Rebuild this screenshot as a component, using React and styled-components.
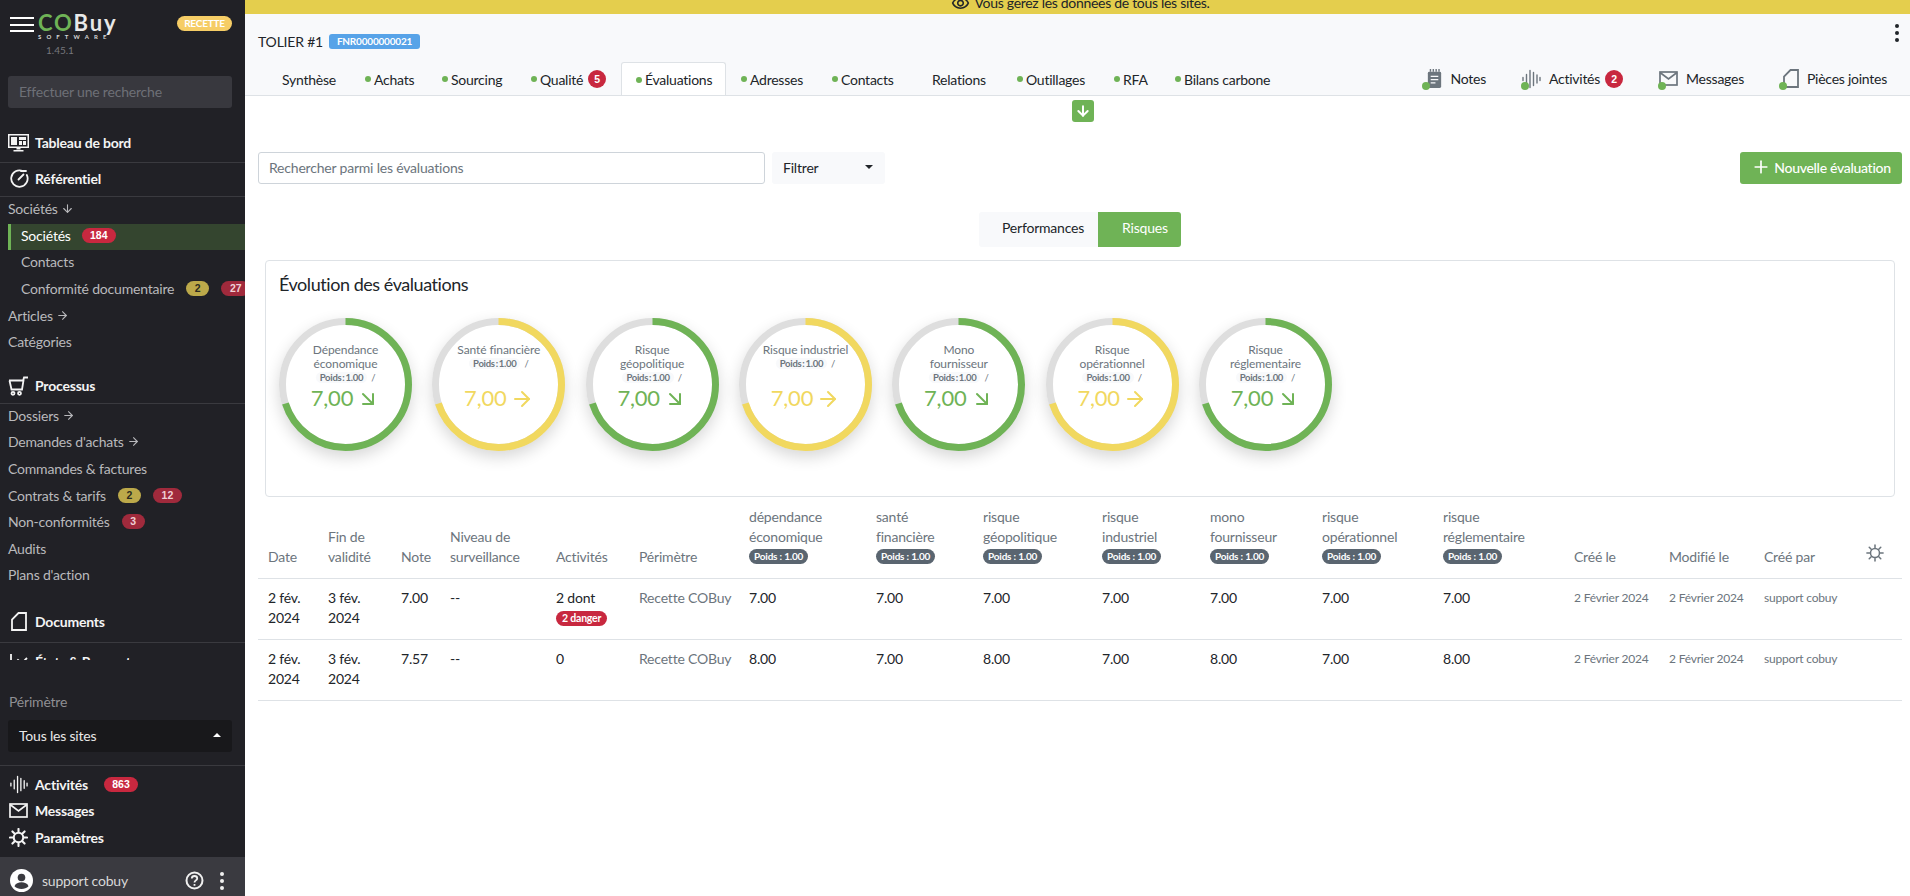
import React from "react";
import styled, { createGlobalStyle } from "styled-components";
import { ArrowRight, ArrowDown, ArrowDownRight, Plus } from "lucide-react";

const GREEN = "#6fb356";
const YELLOW = "#f1d85f";
const RED = "#c8283f";
const GREY = "#6c757d";
const LINE = "#dee2e6";

const Global = createGlobalStyle`
  html, body { margin: 0; padding: 0; height: 100%; overflow: hidden; background: #fff; }
  body { font-family: Lato, "Noto Sans", sans-serif; font-size: 14px; color: #212529; letter-spacing: -.2px; }
  * { box-sizing: border-box; }
`;

const Page = styled.div`display: flex; width: 1910px; height: 896px; overflow: hidden;`;

/* ---------- Sidebar ---------- */
const Sidebar = styled.aside`
  width: 245px; flex: none; height: 896px; background: #212126; color: #b9b9bc;
  display: flex; flex-direction: column; overflow: hidden;
`;
const Brand = styled.div`height: 76px; flex: none; display: flex; align-items: flex-start; padding: 13px 13px 0 10px;`;
const Burger = styled.div`
  width: 24px; height: 15px; margin-top: 4px; flex: none;
  border-top: 2px solid #fff; border-bottom: 2px solid #fff; position: relative;
  &::after { content: ""; position: absolute; left: 0; right: 0; top: 4.5px; height: 2px; background: #fff; }
`;
const Logo = styled.div`margin-left: 4px; display: flex; flex-direction: column; width: 66px;`;
const LogoName = styled.div`font-size: 22px; line-height: 19px; font-weight: 700; color: #e8e8e8; white-space: nowrap; letter-spacing: 1.8px;`;
const LogoCo = styled.span`color: ${GREEN}; font-weight: 700;`;
const LogoSub = styled.div`font-size: 6px; line-height: 7px; margin-top: 1px; letter-spacing: 5.1px; color: #d8d8d8; white-space: nowrap; font-weight: 700;`;
const Version = styled.div`font-size: 10px; line-height: 12px; color: #77777c; margin: 4px 0 0 8px; letter-spacing: 0;`;
const Recette = styled.span`
  margin-left: auto; margin-top: 3px; width: 55px; height: 15px; border-radius: 8px; background: #f6cd66; color: #fff;
  font-size: 10px; line-height: 15px; font-weight: 700; text-align: center;
`;
const SideSearch = styled.div`
  flex: none; height: 32px; margin: 0 13px 0 8px; background: #38383e; border-radius: 3px; color: #6e7077;
  font-size: 14px; line-height: 32px; padding-left: 11px;
`;
const Nav = styled.nav`flex: 1; min-height: 0; overflow: hidden;`;
const Section = styled.div`
  display: flex; align-items: center; gap: 6px; padding: 0 8px ${p => p.$pb}px; margin-top: ${p => p.$mt}px;
  height: ${p => 20 + p.$pb + 1}px; border-bottom: 1px solid #3a3a3f; color: #f4f4f4; font-weight: 700; font-size: 14px; line-height: 20px;
`;
const SectionPlain = styled(Section)`border-bottom: 0;`;
const SectionIcon = styled.span`width: 21px; height: 20px; flex: none; display: flex; align-items: center; justify-content: center;`;
const Item = styled.div`
  height: 26.6px; display: flex; align-items: center; padding: 0 0 3px 8px; white-space: nowrap; font-size: 14px; color: #b9b9bc;
  svg { margin-left: 3px; }
`;
const SubItem = styled(Item)`padding-left: 21px;`;
const ActiveItem = styled(SubItem)`
  margin-left: 8px; padding-left: 10px; color: #fff; background: #34452f; border-left: 3px solid ${GREEN};
`;
const Pill = styled.span`
  flex: none; margin-left: ${p => p.$ml ?? 12}px; height: 15px; min-width: ${p => p.$w}px; border-radius: 8px; text-align: center;
  font-family: "Liberation Sans", Arial, sans-serif; font-size: 10.5px; line-height: 15px; font-weight: 700; letter-spacing: 0;
  background: ${p => p.$bg}; color: ${p => p.$fg};
`;
const Perimeter = styled.div`flex: none; padding: 32px 13px 13px 8px; border-bottom: 1px solid #3a3a3f;`;
const PerimeterLabel = styled.div`line-height: 20px; color: #8f8f93; padding-left: 1px;`;
const PerimeterSelect = styled.div`
  margin-top: 8px; height: 32px; background: #18181b; border-radius: 3px; color: #e8e8e8; display: flex; align-items: center;
  justify-content: space-between; padding: 0 11px 2px;
`;
const Caret = styled.span`
  width: 0; height: 0; border-left: 4px solid transparent; border-right: 4px solid transparent;
  ${p => p.$up ? `border-bottom: 4px solid ${p.$c};` : `border-top: 4px solid ${p.$c};`}
`;
const Bottom = styled.div`flex: none; height: 91px; padding: 6px 0 0;`;
const BottomRow = styled.div`
  height: 26.6px; display: flex; align-items: center; gap: 7px; padding: 0 0 2px 9px; color: #f4f4f4; font-weight: 700;
  svg { flex: none; }
`;
const Footer = styled.div`
  flex: none; height: 39px; background: #3a3a40; display: flex; align-items: flex-start; padding: 12px 21px 0 10px; color: #d8d8d8;
`;
const Avatar = styled.div`width: 23px; height: 23px; flex: none;`;
const FooterName = styled.span`margin-left: 9px; line-height: 24px; flex: 1;`;
const FooterIcons = styled.div`display: flex; align-items: center; gap: 16px; height: 23px;`;
const Kebab = styled.div`display: flex; flex-direction: column; gap: 3px;`;
const TitleKebab = styled(Kebab)`margin: -18px 3px 0 auto;`;
const KebabDot = styled.span`width: 4px; height: 4px; border-radius: 50%; background: ${p => p.$c};`;

/* ---------- Main ---------- */
const Main = styled.main`flex: 1; min-width: 0; display: flex; flex-direction: column;`;
const Banner = styled.div`
  height: 14px; flex: none; background: #e4ce4d; overflow: hidden; display: flex; justify-content: center; align-items: flex-end;
  gap: 4px; color: #212529; font-size: 14px; line-height: 20px; white-space: nowrap; padding: 0 0 1px 6px; letter-spacing: -.3px;
  svg { flex: none; margin-bottom: 0; }
`;
const Header = styled.header`
  flex: none; height: 82px; background: #f8f9fb; border-bottom: 1px solid ${LINE}; padding: 18px 8px 0 13px; display: flex; flex-direction: column;
`;
const TitleRow = styled.div`display: flex; align-items: center; height: 20px; margin-bottom: 11px;`;
const Title = styled.span`font-size: 14px; color: #212529;`;
const Chip = styled.span`
  margin-left: 6px; width: 91px; height: 15px; background: #57a3e8; border-radius: 3px; color: #fff; font-size: 10px; line-height: 15px;
  font-weight: 700; text-align: center;
`;
const TabBar = styled.div`display: flex; height: 33px; align-items: stretch;`;
const Tab = styled.div`
  display: flex; align-items: center; padding: 1px 0 0 14px; width: ${p => p.$w}px; flex: none; white-space: nowrap; font-size: 14px; color: #212529; letter-spacing: -.25px;
  border: 1px solid ${p => p.$active ? LINE : "transparent"}; border-bottom: 0; border-radius: 3px 3px 0 0;
  background: ${p => p.$active ? "#fff" : "transparent"};
  height: ${p => p.$active ? "33px" : "32px"};
`;
const Dot = styled.span`
  width: 6px; height: 6px; border-radius: 50%; margin-right: 3px; flex: none; background: ${p => p.$off ? "transparent" : GREEN};
`;
const Count = styled.span`
  margin-left: 5px; width: 18px; height: 18px; border-radius: 50%; background: ${RED}; color: #fff; letter-spacing: 0;
  font-size: 10.5px; font-weight: 700; line-height: 18px; text-align: center; font-family: "Liberation Sans", Arial, sans-serif;
`;
const RightCount = styled(Count)`margin-left: -3px;`;
const RightTabs = styled.div`margin-left: auto; display: flex;`;
const RightTab = styled.div`
  display: flex; align-items: center; padding: 1px 0 0; margin-right: ${p => p.$mr}px; gap: 8px; white-space: nowrap; height: 32px; letter-spacing: -.25px;
`;
const IconWrap = styled.span`position: relative; display: inline-flex; justify-content: flex-end; align-items: center; width: 20px; height: 20px; flex: none;`;
const IconDot = styled.span`position: absolute; left: 0; bottom: -1px; width: 8px; height: 8px; border-radius: 50%; background: ${GREEN};`;

const Body = styled.div`flex: 1; padding: 0 8px 0 13px; min-height: 0;`;
const Collapse = styled.div`
  width: 22px; height: 22px; margin: 4px auto 0; position: relative; left: 3px; background: ${GREEN}; border-radius: 3px; color: #fff;
  display: flex; align-items: center; justify-content: center;
`;
const SearchRow = styled.div`display: flex; align-items: stretch; height: 32px; margin-top: 30px; gap: 7px;`;
const SearchBox = styled.div`
  width: 507px; border: 1px solid #ced4da; border-radius: 3px; color: ${GREY}; line-height: 30px; padding-left: 10px; font-size: 14px;
`;
const Filter = styled.div`
  width: 113px; background: #f8f9fb; border-radius: 3px; display: flex; align-items: center; justify-content: space-between; padding: 0 12px 2px 11px; color: #212529;
`;
const AddButton = styled.div`
  margin-left: auto; width: 162px; background: ${GREEN}; border-radius: 3px; color: #fff; display: flex; align-items: center; justify-content: center;
  gap: 3px; font-weight: 500; white-space: nowrap; letter-spacing: -.3px; padding-bottom: 2px;
`;
const Toggle = styled.div`display: flex; justify-content: center; margin-top: 28px; height: 35px;`;
const ToggleBtn = styled.div`
  width: ${p => p.$w}px; padding-left: ${p => p.$pl}px; line-height: 32px; color: ${p => p.$active ? "#fff" : "#212529"};
  background: ${p => p.$active ? GREEN : "#f8f9fb"}; border-radius: ${p => p.$active ? "0 3px 3px 0" : "3px 0 0 3px"};
`;
const Card = styled.section`
  height: 237px; margin: 13px 7px 0; border: 1px solid ${LINE}; border-radius: 4px; padding: 11px 13px 0;
`;
const CardTitle = styled.h2`margin: 0; font-size: 18px; font-weight: 400; line-height: 24px; color: #212529; letter-spacing: -.45px;`;
const Gauges = styled.div`display: flex; gap: 20.33px; margin-top: 22px;`;
const Gauge = styled.div`
  position: relative; width: 133px; height: 133px; flex: none; border-radius: 50%; box-shadow: 0 6px 16px rgba(0,0,0,.16);
  display: flex; flex-direction: column; align-items: center; padding-top: 25px;
`;
const Ring = styled.svg`position: absolute; inset: 0; width: 133px; height: 133px;`;
const GaugeTop = styled.div`height: 42px; width: 100px; text-align: center; color: ${GREY}; position: relative;`;
const GaugeLabel = styled.div`font-size: 12px; line-height: 14px; width: 88px; margin: 0 auto; letter-spacing: -.1px;`;
const GaugeWeight = styled.div`font-size: 9.5px; line-height: 12px; margin-top: 1px;`;
const WeightPill = styled.span`background: #f8f9fb; border-radius: 6px; padding: 0 4px; font-weight: 700; margin-right: 4px; letter-spacing: -.3px; word-spacing: -1px;`;
const GaugeValue = styled.div`
  display: flex; align-items: center; gap: 3px; height: 26px; font-size: 22px; font-weight: 400; color: ${p => p.$c}; position: relative; line-height: 26px;
  svg { margin-top: 2px; }
`;

const Table = styled.table`width: 1644px; table-layout: fixed; border-collapse: collapse;`;
const Col = styled.col`width: ${p => p.$w}px;`;
const Th = styled.th`
  padding: 10px 10px 11px; vertical-align: bottom; text-align: left; font-weight: 400; color: ${GREY}; font-size: 14px; line-height: 20px;
  border-bottom: 1px solid ${LINE};
`;
const ThLine = styled.div`white-space: nowrap;`;
const WeightBadge = styled.div`
  display: inline-block; vertical-align: bottom; height: 15px; line-height: 15px; margin: 2px 0 3px; padding: 0 5px; border-radius: 8px; background: #5a6570; color: #fff;
  font-size: 10px; font-weight: 700; white-space: nowrap; letter-spacing: -.2px;
`;
const Td = styled.td`
  padding: 9px 10px 11px; vertical-align: top; font-size: 14px; line-height: 20px; height: 61px; border-bottom: 1px solid ${LINE};
  color: ${p => p.$muted ? GREY : "#212529"}; white-space: ${p => p.$nowrap ? "nowrap" : "normal"};
`;
const SmallTd = styled(Td)`font-size: 12px; color: ${GREY}; white-space: nowrap;`;
const DangerBadge = styled.span`
  display: inline-block; height: 15px; line-height: 15px; padding: 0 6px; background: ${RED}; color: #fff; border-radius: 8px; font-size: 10.5px; font-weight: 700; vertical-align: top; margin-top: 3px;
`;

/* ---------- Icons ---------- */
const Wave = ({ c, s = 20 }) => (
  <svg width={s} height={s} viewBox="0 0 20 20" fill="none" stroke={c} strokeWidth="1.4" strokeLinecap="round">
    <path d="M2 8.500v3M5.500 5.500v9M9 1.500v17M12.500 3.500v13M16 6v8M19 8.500v3" />
  </svg>
);
const Mail = ({ c, w = 19, h = 15 }) => (
  <svg width={w} height={h} viewBox="0 0 19 15" fill="none" stroke={c} strokeWidth="1.7">
    <rect x="1" y="1" width="17" height="13" />
    <path d="M1 1.500l8.500 6.500L18 1.500" />
  </svg>
);
const Doc = ({ c, w = 16, h = 19 }) => (
  <svg width={w} height={h} viewBox="0 0 16 19" fill="none" stroke={c} strokeWidth="1.8">
    <path d="M1 18V7.500L7.500 1H15v17z" />
  </svg>
);
const Gear = ({ c, s = 18, w = 1.7 }) => (
  <svg width={s} height={s} viewBox="0 0 20 20" fill="none" stroke={c} strokeWidth={w} strokeLinecap="round">
    <circle cx="10" cy="10" r="5" />
    <path d="M10 1v3M10 16v3M1 10h3M16 10h3M3.600 3.600l2.200 2.200M14.200 14.200l2.200 2.200M3.600 16.400l2.200-2.200M14.200 5.800l2.200-2.200" />
  </svg>
);
const Monitor = () => (
  <svg width="21" height="20" viewBox="0 0 21 20" fill="none">
    <rect x=".75" y="1.750" width="19.500" height="12.500" stroke="#f4f4f4" strokeWidth="1.500" />
    <path d="M3 4h6v8H3zM11 4h7v3h-7zM11 8h3v4h-3zM15 8h3v4h-3z" fill="#f4f4f4" />
    <path d="M8.500 14.500h4v2h-4zM5.500 17h10v1.500h-10z" fill="#f4f4f4" />
  </svg>
);
const Dial = () => (
  <svg width="20" height="20" viewBox="0 0 20 20" fill="none" stroke="#f4f4f4" strokeWidth="1.800" strokeLinecap="round">
    <path d="M14 2.200A8.200 8.200 0 1 0 17.800 6" />
    <path d="M9.500 10.500l5-5" />
    <path d="M12 2h5v0" />
  </svg>
);
const Cart = () => (
  <svg width="21" height="20" viewBox="0 0 21 20" fill="none" stroke="#f4f4f4" strokeWidth="1.800">
    <path d="M1 4.500h14.500l-1.500 9H3.500L1.500 4.500zM15 5l1-3.500h4" />
    <circle cx="5" cy="17.300" r="1.500" />
    <circle cx="11.500" cy="17.300" r="1.500" />
  </svg>
);
const ChartIcon = () => (
  <svg width="20" height="20" viewBox="0 0 20 20" fill="none" stroke="#f4f4f4" strokeWidth="1.800">
    <path d="M2 2v16h17" />
    <path d="M5 12l4-4 4 3 5-5" />
  </svg>
);
const NoteIcon = () => (
  <svg width="15" height="19" viewBox="0 0 14 20" fill="#6c757d">
    <rect x="0" y="3" width="14" height="17" rx="1.500" />
    <path d="M2 0h1.500v3H2zM5 0h1.500v3H5zM8 0h1.500v3H8zM11 0h1.500v3H11z" />
    <path d="M3 7h8v1.300H3zM3 10.500h8v1.300H3zM3 14h5v1.300H3z" fill="#f8f9fb" />
  </svg>
);
const EyeIcon = () => (
  <svg width="19" height="19" viewBox="0 0 24 24" fill="#212529">
    <path d="M12 6c3.790 0 7.170 2.130 8.820 5.500C19.170 14.870 15.790 17 12 17s-7.170-2.130-8.820-5.500C4.830 8.130 8.210 6 12 6m0-2C7 4 2.730 7.110 1 11.500 2.730 15.890 7 19 12 19s9.270-3.110 11-7.500C21.270 7.110 17 4 12 4zm0 5c1.380 0 2.500 1.120 2.500 2.500S13.380 14 12 14s-2.500-1.120-2.500-2.500S10.620 9 12 9m0-2c-2.480 0-4.500 2.020-4.500 4.500S9.520 16 12 16s4.500-2.020 4.500-4.500S14.480 7 12 7z" />
  </svg>
);
const UserIcon = () => (
  <svg width="23" height="23" viewBox="0 0 23 23">
    <circle cx="11.500" cy="11.500" r="11.500" fill="#fff" />
    <circle cx="11.500" cy="8.500" r="3.800" fill="#3a3a40" />
    <path d="M4.500 17.200c1-3 4-4 7-4s6 1 7 4c-1.800 1.800-4.300 2.800-7 2.800s-5.200-1-7-2.800z" fill="#3a3a40" />
  </svg>
);
const HelpIcon = () => (
  <svg width="19" height="19" viewBox="0 0 19 19" fill="none" stroke="#f0f0f0" strokeWidth="2">
    <circle cx="9.500" cy="9.500" r="8" />
    <path d="M6.800 7.500c0-1.500 1.200-2.500 2.700-2.500s2.700 1 2.700 2.400c0 2-2.700 2-2.700 4" strokeWidth="1.800" />
    <path d="M9.500 13v1.800" strokeWidth="1.800" />
  </svg>
);

/* ---------- Data ---------- */
const GAUGES = [
  { label: "Dépendance économique", c: GREEN, down: true },
  { label: "Santé\u00a0financière", c: YELLOW },
  { label: "Risque géopolitique", c: GREEN, down: true },
  { label: "Risque\u00a0industriel", c: YELLOW },
  { label: "Mono fournisseur", c: GREEN, down: true },
  { label: "Risque opérationnel", c: YELLOW },
  { label: "Risque réglementaire", c: GREEN, down: true },
];
const WIDTHS = [60, 73, 49, 106, 83, 110, 127, 107, 119, 108, 112, 121, 131, 95, 95, 102, 46];
const CRITERIA = [
  ["dépendance", "économique"], ["santé", "financière"], ["risque", "géopolitique"], ["risque", "industriel"],
  ["mono", "fournisseur"], ["risque", "opérationnel"], ["risque", "réglementaire"],
];
const ROWS = [
  { note: "7.00", act: "2 dont", danger: true, vals: ["7.00", "7.00", "7.00", "7.00", "7.00", "7.00", "7.00"] },
  { note: "7.57", act: "0", danger: false, vals: ["8.00", "7.00", "8.00", "7.00", "8.00", "7.00", "8.00"] },
];
const TABS = [
  { t: "Synthèse", off: true, w: 92 }, { t: "Achats", w: 77 }, { t: "Sourcing", w: 89 }, { t: "Qualité", n: 5, w: 105 },
  { t: "Évaluations", active: true, w: 105 }, { t: "Adresses", w: 91 }, { t: "Contacts", w: 91 }, { t: "Relations", off: true, w: 94 },
  { t: "Outillages", w: 97 }, { t: "RFA", w: 61 }, { t: "Bilans carbone", w: 115 },
];
const CIRC = 2 * Math.PI * 63;

const Dim = { y: "#bca94a", r: "#a02a3c" };

export default function App() {
  return (
    <Page>
      <Global />
      <Sidebar>
        <Brand>
          <Burger />
          <Logo>
            <LogoName><LogoCo>CO</LogoCo>Buy</LogoName>
            <LogoSub>SOFTWARE</LogoSub>
            <Version>1.45.1</Version>
          </Logo>
          <Recette>RECETTE</Recette>
        </Brand>
        <SideSearch>Effectuer une recherche</SideSearch>
        <Nav>
          <Section $mt={25} $pb={9}><SectionIcon><Monitor /></SectionIcon>Tableau de bord</Section>
          <Section $mt={6} $pb={7}><SectionIcon><Dial /></SectionIcon>Référentiel</Section>
          <Item>Sociétés <ArrowDown size={13} /></Item>
          <ActiveItem>Sociétés<Pill $ml={11} $w={34} $bg={RED} $fg="#fff">184</Pill></ActiveItem>
          <SubItem>Contacts</SubItem>
          <SubItem>Conformité documentaire<Pill $w={23} $bg={Dim.y} $fg="#2b2b20">2</Pill><Pill $w={29} $bg={Dim.r} $fg="#f0d0d5">27</Pill></SubItem>
          <Item>Articles <ArrowRight size={13} /></Item>
          <Item>Catégories</Item>
          <Section $mt={19} $pb={7}><SectionIcon><Cart /></SectionIcon>Processus</Section>
          <Item>Dossiers <ArrowRight size={13} /></Item>
          <Item>Demandes d'achats <ArrowRight size={13} /></Item>
          <Item>Commandes &amp; factures</Item>
          <Item>Contrats &amp; tarifs<Pill $w={23} $bg={Dim.y} $fg="#2b2b20">2</Pill><Pill $w={29} $bg={Dim.r} $fg="#f0d0d5">12</Pill></Item>
          <Item>Non-conformités<Pill $w={23} $bg={Dim.r} $fg="#f0d0d5">3</Pill></Item>
          <Item>Audits</Item>
          <Item>Plans d'action</Item>
          <Section $mt={22} $pb={10}><SectionIcon><Doc c="#f4f4f4" /></SectionIcon>Documents</Section>
          <SectionPlain $mt={9} $pb={0}><SectionIcon><ChartIcon /></SectionIcon>États &amp; Rapports</SectionPlain>
        </Nav>
        <Perimeter>
          <PerimeterLabel>Périmètre</PerimeterLabel>
          <PerimeterSelect>Tous les sites<Caret $up $c="#fff" /></PerimeterSelect>
        </Perimeter>
        <Bottom>
          <BottomRow><Wave c="#f4f4f4" s={19} />Activités<Pill $ml={9} $w={34} $bg={RED} $fg="#fff">863</Pill></BottomRow>
          <BottomRow><Mail c="#f4f4f4" />Messages</BottomRow>
          <BottomRow><Gear c="#f4f4f4" s={19} w={2.2} />Paramètres</BottomRow>
        </Bottom>
        <Footer>
          <Avatar><UserIcon /></Avatar>
          <FooterName>support cobuy</FooterName>
          <FooterIcons>
            <HelpIcon />
            <Kebab>
              <KebabDot $c="#f0f0f0" /><KebabDot $c="#f0f0f0" /><KebabDot $c="#f0f0f0" />
            </Kebab>
          </FooterIcons>
        </Footer>
      </Sidebar>

      <Main>
        <Banner><EyeIcon />Vous gérez les données de tous les sites.</Banner>
        <Header>
          <TitleRow>
            <Title>TOLIER #1</Title>
            <Chip>FNR0000000021</Chip>
            <TitleKebab><KebabDot $c="#212529" /><KebabDot $c="#212529" /><KebabDot $c="#212529" /></TitleKebab>
          </TitleRow>
          <TabBar>
            {TABS.map(t => (
              <Tab key={t.t} $active={t.active} $w={t.w}>
                <Dot $off={t.off} />{t.t}{t.n ? <Count>{t.n}</Count> : null}
              </Tab>
            ))}
            <RightTabs>
              <RightTab $mr={35}><IconWrap><NoteIcon /><IconDot /></IconWrap>Notes</RightTab>
              <RightTab $mr={35}><IconWrap><Wave c="#6c757d" /><IconDot /></IconWrap>Activités<RightCount>2</RightCount></RightTab>
              <RightTab $mr={35}><IconWrap><Mail c="#6c757d" /><IconDot /></IconWrap>Messages</RightTab>
              <RightTab $mr={15}><IconWrap><Doc c="#6c757d" /><IconDot /></IconWrap>Pièces jointes</RightTab>
            </RightTabs>
          </TabBar>
        </Header>
        <Body>
          <Collapse><ArrowDown size={16} strokeWidth={3} /></Collapse>
          <SearchRow>
            <SearchBox>Rechercher parmi les évaluations</SearchBox>
            <Filter>Filtrer<Caret $c="#212529" /></Filter>
            <AddButton><Plus size={20} />Nouvelle évaluation</AddButton>
          </SearchRow>
          <Toggle>
            <ToggleBtn $w={119} $pl={23}>Performances</ToggleBtn>
            <ToggleBtn $w={83} $pl={24} $active>Risques</ToggleBtn>
          </Toggle>
          <Card>
            <CardTitle>Évolution des évaluations</CardTitle>
            <Gauges>
              {GAUGES.map(g => (
                <Gauge key={g.label}>
                  <Ring viewBox="0 0 133 133">
                    <circle cx="66.500" cy="66.500" r="63" fill="#fff" stroke="#dedede" strokeWidth="7" />
                    <circle cx="66.500" cy="66.500" r="63" fill="none" stroke={g.c} strokeWidth="7"
                      strokeDasharray={`${CIRC * 0.7} ${CIRC}`} transform="rotate(-90 66.500 66.500)" />
                  </Ring>
                  <GaugeTop>
                    <GaugeLabel>{g.label}</GaugeLabel>
                    <GaugeWeight><WeightPill>Poids : 1.00</WeightPill>/</GaugeWeight>
                  </GaugeTop>
                  <GaugeValue $c={g.c}>
                    7,00
                    {g.down ? <ArrowDownRight size={24} /> : <ArrowRight size={24} />}
                  </GaugeValue>
                </Gauge>
              ))}
            </Gauges>
          </Card>
          <Table>
            <colgroup>{WIDTHS.map((w, i) => <Col key={i} $w={w} />)}</colgroup>
            <thead>
              <tr>
                <Th>Date</Th>
                <Th>Fin de validité</Th>
                <Th>Note</Th>
                <Th>Niveau de surveillance</Th>
                <Th>Activités</Th>
                <Th>Périmètre</Th>
                {CRITERIA.map(c => (
                  <Th key={c[1]}>
                    <ThLine>{c[0]}</ThLine>
                    <ThLine>{c[1]}</ThLine>
                    <WeightBadge>Poids : 1.00</WeightBadge>
                  </Th>
                ))}
                <Th>Créé le</Th>
                <Th>Modifié le</Th>
                <Th>Créé par</Th>
                <Th><Gear c="#6c757d" /></Th>
              </tr>
            </thead>
            <tbody>
              {ROWS.map(r => (
                <tr key={r.note}>
                  <Td>2 fév. 2024</Td>
                  <Td>3 fév. 2024</Td>
                  <Td>{r.note}</Td>
                  <Td>--</Td>
                  <Td>{r.act}{r.danger ? <div><DangerBadge>2 danger</DangerBadge></div> : null}</Td>
                  <Td $muted $nowrap>Recette COBuy</Td>
                  {r.vals.map((v, i) => <Td key={i}>{v}</Td>)}
                  <SmallTd>2 Février 2024</SmallTd>
                  <SmallTd>2 Février 2024</SmallTd>
                  <SmallTd>support cobuy</SmallTd>
                  <Td />
                </tr>
              ))}
            </tbody>
          </Table>
        </Body>
      </Main>
    </Page>
  );
}
